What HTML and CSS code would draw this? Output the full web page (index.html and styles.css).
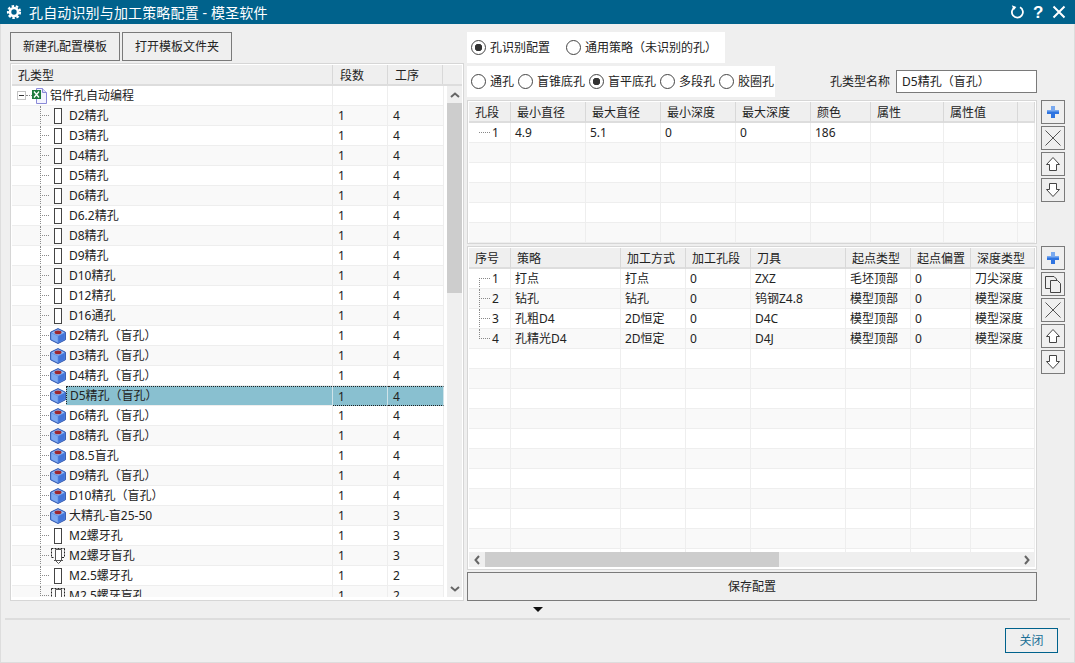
FILE: index.html
```html
<!DOCTYPE html>
<html lang="zh-CN">
<head>
  <meta charset="UTF-8" />
  <title>孔自动识别与加工策略配置 - 模圣软件</title>
  <link rel="stylesheet" href="styles.css">
</head>
<body>
  <svg class="icon-defs" width="0" height="0">
    <symbol id="i-hole" viewBox="0 0 16 16">
      <rect x="4.500" y="0.500" width="7" height="15" fill="#fff" stroke="#444"/>
    </symbol>
    <symbol id="i-cube" viewBox="0 0 16 16">
      <path d="M8 .6 15.400 4.200V11.800L8 15.500.6 11.800V4.200Z" fill="#5b8fe6" stroke="#2f55ad" stroke-linejoin="round"/>
      <path d="M1.400 5.200 7.700 8.300V14.500L1.400 11.300Z" fill="#7fa9f0"/>
      <path d="M8.300 8.300 14.600 5.200V11.300L8.300 14.500Z" fill="#4274d8"/>
      <path d="M8 1.400 14.400 4.400 8 7.600 1.600 4.400Z" fill="#9dbdf3"/>
      <ellipse cx="8" cy="4.400" rx="3.500" ry="1.800" fill="#9c2730"/>
    </symbol>
    <symbol id="i-thread" viewBox="0 0 16 16">
      <path d="M1.500 .5H14.500M1.500 .5V9.500M14.500 .5V9.500M1.500 9.500H4M12 9.500H14.500" fill="none" stroke="#222" stroke-dasharray="2 1"/>
      <path d="M5.500 1.500H11.500V12.500L8.500 15.500 5.500 12.500Z" fill="#fff" stroke="#555"/>
      <path d="M4 12.500H13" stroke="#555"/>
    </symbol>
    <symbol id="i-plus" viewBox="0 0 24 24">
      <path d="M10 6h4v4h4v4h-4v4h-4v-4H6v-4h4Z" fill="#2f74e0"/>
      <path d="M10 6h4v4h-4ZM6 10h12v1.500H6Z" fill="#79a9ef"/>
    </symbol>
    <symbol id="i-cross" viewBox="0 0 24 24">
      <path d="M4.500 4.500 19.500 19.500M19.500 4.500 4.500 19.500" stroke="#555" fill="none"/>
    </symbol>
    <symbol id="i-up" viewBox="0 0 24 24">
      <path d="M12 5.500 18.500 12.500H15.500V18.500H8.500V12.500H5.500Z" fill="#fff" stroke="#444"/>
    </symbol>
    <symbol id="i-down" viewBox="0 0 24 24">
      <path d="M12 18.500 18.500 11.500H15.500V5.500H8.500V11.500H5.500Z" fill="#fff" stroke="#444"/>
    </symbol>
    <symbol id="i-copy" viewBox="0 0 24 24">
      <path d="M4.500 4.500H13L15.500 7V16.500H4.500Z" fill="#efefef" stroke="#444"/>
      <path d="M9.500 8.500H16.500L19.500 11.500V20.500H9.500Z" fill="#efefef" stroke="#444"/>
    </symbol>
  </svg>

  <div class="window">
    <header class="titlebar">
      <svg class="gear" viewBox="0 0 16 16" width="16" height="16">
        <circle cx="8" cy="8" r="4" fill="none" stroke="#fff" stroke-width="2.600"/>
        <circle cx="8" cy="8" r="6" fill="none" stroke="#fff" stroke-width="2.200" stroke-dasharray="2.500 1.690"/>
      </svg>
      <span class="title">孔自动识别与加工策略配置 - 模圣软件</span>
      <svg class="win-btn" viewBox="0 0 16 16" width="16" height="16">
        <path d="M6 3.200A5.500 5.500 0 1 0 11 3.300" fill="none" stroke="#fff" stroke-width="1.800"/>
        <path d="M2.800 1.200 7.300 3 4.800 6.200Z" fill="#fff"/>
      </svg>
      <span class="help">?</span>
      <svg class="win-btn" viewBox="0 0 16 16" width="16" height="16">
        <path d="M2.500 2.500 13.500 13.500M13.500 2.500 2.500 13.500" fill="none" stroke="#fff" stroke-width="2"/>
      </svg>
    </header>

    <main class="content">
      <section class="left">
        <div class="toolbar">
          <button class="btn">新建孔配置模板</button>
          <button class="btn">打开模板文件夹</button>
        </div>
        <div class="panel tree-panel">
          <div class="tree-head">
            <span>孔类型</span><span>段数</span><span>工序</span><span></span>
          </div>
          <div class="tree-body">
            <div class="tree-clip">
              <table class="data tree">
                <colgroup><col><col><col></colgroup>
                <tbody>
                  <tr><td><div class="root"><span class="minus"></span><span class="root-stub"></span>
                    <svg width="15" height="16" viewBox="0 0 15 16"><path d="M4.500 .5H10.500L14.500 4.500V15.500H4.500Z" fill="#f4f4ff" stroke="#8a8ad8"/><path d="M10.500 .5V4.500H14.500" fill="#dcdcfa" stroke="#8a8ad8"/><rect x="0" y="2" width="9" height="9" fill="#1d7a3c"/><path d="M2 3.500 7 9.500M7 3.500 2 9.500" stroke="#fff" stroke-width="1.300"/></svg>
                    <span class="root-label">铝件孔自动编程</span></div></td><td></td><td></td></tr>
                  <tr><td><div class="node"><span class="stub"></span><svg width="16" height="16"><use href="#i-hole"/></svg><span class="label">D2精孔</span></div></td><td>1</td><td>4</td></tr>
                  <tr><td><div class="node"><span class="stub"></span><svg width="16" height="16"><use href="#i-hole"/></svg><span class="label">D3精孔</span></div></td><td>1</td><td>4</td></tr>
                  <tr><td><div class="node"><span class="stub"></span><svg width="16" height="16"><use href="#i-hole"/></svg><span class="label">D4精孔</span></div></td><td>1</td><td>4</td></tr>
                  <tr><td><div class="node"><span class="stub"></span><svg width="16" height="16"><use href="#i-hole"/></svg><span class="label">D5精孔</span></div></td><td>1</td><td>4</td></tr>
                  <tr><td><div class="node"><span class="stub"></span><svg width="16" height="16"><use href="#i-hole"/></svg><span class="label">D6精孔</span></div></td><td>1</td><td>4</td></tr>
                  <tr><td><div class="node"><span class="stub"></span><svg width="16" height="16"><use href="#i-hole"/></svg><span class="label">D6.2精孔</span></div></td><td>1</td><td>4</td></tr>
                  <tr><td><div class="node"><span class="stub"></span><svg width="16" height="16"><use href="#i-hole"/></svg><span class="label">D8精孔</span></div></td><td>1</td><td>4</td></tr>
                  <tr><td><div class="node"><span class="stub"></span><svg width="16" height="16"><use href="#i-hole"/></svg><span class="label">D9精孔</span></div></td><td>1</td><td>4</td></tr>
                  <tr><td><div class="node"><span class="stub"></span><svg width="16" height="16"><use href="#i-hole"/></svg><span class="label">D10精孔</span></div></td><td>1</td><td>4</td></tr>
                  <tr><td><div class="node"><span class="stub"></span><svg width="16" height="16"><use href="#i-hole"/></svg><span class="label">D12精孔</span></div></td><td>1</td><td>4</td></tr>
                  <tr><td><div class="node"><span class="stub"></span><svg width="16" height="16"><use href="#i-hole"/></svg><span class="label">D16通孔</span></div></td><td>1</td><td>4</td></tr>
                  <tr><td><div class="node"><span class="stub"></span><svg width="16" height="16"><use href="#i-cube"/></svg><span class="label">D2精孔（盲孔）</span></div></td><td>1</td><td>4</td></tr>
                  <tr><td><div class="node"><span class="stub"></span><svg width="16" height="16"><use href="#i-cube"/></svg><span class="label">D3精孔（盲孔）</span></div></td><td>1</td><td>4</td></tr>
                  <tr><td><div class="node"><span class="stub"></span><svg width="16" height="16"><use href="#i-cube"/></svg><span class="label">D4精孔（盲孔）</span></div></td><td>1</td><td>4</td></tr>
                  <tr class="selected"><td><div class="node"><span class="stub"></span><svg width="16" height="16"><use href="#i-cube"/></svg><span class="label">D5精孔（盲孔）</span></div></td><td>1</td><td>4</td></tr>
                  <tr><td><div class="node"><span class="stub"></span><svg width="16" height="16"><use href="#i-cube"/></svg><span class="label">D6精孔（盲孔）</span></div></td><td>1</td><td>4</td></tr>
                  <tr><td><div class="node"><span class="stub"></span><svg width="16" height="16"><use href="#i-cube"/></svg><span class="label">D8精孔（盲孔）</span></div></td><td>1</td><td>4</td></tr>
                  <tr><td><div class="node"><span class="stub"></span><svg width="16" height="16"><use href="#i-cube"/></svg><span class="label">D8.5盲孔</span></div></td><td>1</td><td>4</td></tr>
                  <tr><td><div class="node"><span class="stub"></span><svg width="16" height="16"><use href="#i-cube"/></svg><span class="label">D9精孔（盲孔）</span></div></td><td>1</td><td>4</td></tr>
                  <tr><td><div class="node"><span class="stub"></span><svg width="16" height="16"><use href="#i-cube"/></svg><span class="label">D10精孔（盲孔）</span></div></td><td>1</td><td>4</td></tr>
                  <tr><td><div class="node"><span class="stub"></span><svg width="16" height="16"><use href="#i-cube"/></svg><span class="label">大精孔-盲25-50</span></div></td><td>1</td><td>3</td></tr>
                  <tr><td><div class="node"><span class="stub"></span><svg width="16" height="16"><use href="#i-hole"/></svg><span class="label">M2螺牙孔</span></div></td><td>1</td><td>3</td></tr>
                  <tr><td><div class="node"><span class="stub"></span><svg width="16" height="16"><use href="#i-thread"/></svg><span class="label">M2螺牙盲孔</span></div></td><td>1</td><td>3</td></tr>
                  <tr><td><div class="node"><span class="stub"></span><svg width="16" height="16"><use href="#i-hole"/></svg><span class="label">M2.5螺牙孔</span></div></td><td>1</td><td>2</td></tr>
                  <tr><td><div class="node"><span class="stub"></span><svg width="16" height="16"><use href="#i-thread"/></svg><span class="label">M2.5螺牙盲孔</span></div></td><td>1</td><td>2</td></tr>
                </tbody>
              </table>
            </div>
            <div class="vscroll">
              <span class="arrow"><svg width="10" height="6" viewBox="0 0 10 6"><path d="M1 5 5 1.500 9 5" fill="none" stroke="#666" stroke-width="2"/></svg></span>
              <span class="vthumb"></span>
              <span class="track"></span>
              <span class="arrow"><svg width="10" height="6" viewBox="0 0 10 6"><path d="M1 1 5 4.500 9 1" fill="none" stroke="#666" stroke-width="2"/></svg></span>
            </div>
          </div>
        </div>
      </section>

      <section class="right">
        <div class="radio-box mode-box">
          <label class="radio on">孔识别配置</label>
          <label class="radio">通用策略（未识别的孔）</label>
        </div>
        <div class="type-row">
          <div class="radio-box type-box">
            <label class="radio">通孔</label>
            <label class="radio">盲锥底孔</label>
            <label class="radio on">盲平底孔</label>
            <label class="radio">多段孔</label>
            <label class="radio">胶圈孔</label>
          </div>
          <span class="name-label">孔类型名称</span>
          <span class="name-input">D5精孔（盲孔）</span>
        </div>

        <div class="section seg-section">
          <div class="panel">
            <table class="data seg">
              <colgroup><col><col><col><col><col><col><col><col><col></colgroup>
              <thead><tr><th>孔段</th><th>最小直径</th><th>最大直径</th><th>最小深度</th><th>最大深度</th><th>颜色</th><th>属性</th><th>属性值</th><th></th></tr></thead>
              <tbody>
                <tr><td class="seq solo">1</td><td>4.9</td><td>5.1</td><td>0</td><td>0</td><td>186</td><td></td><td></td><td></td></tr>
                <tr><td></td><td></td><td></td><td></td><td></td><td></td><td></td><td></td><td></td></tr>
                <tr><td></td><td></td><td></td><td></td><td></td><td></td><td></td><td></td><td></td></tr>
                <tr><td></td><td></td><td></td><td></td><td></td><td></td><td></td><td></td><td></td></tr>
                <tr><td></td><td></td><td></td><td></td><td></td><td></td><td></td><td></td><td></td></tr>
                <tr><td></td><td></td><td></td><td></td><td></td><td></td><td></td><td></td><td></td></tr>
              </tbody>
            </table>
          </div>
          <div class="side-btns">
            <button class="icon-btn"><svg width="24" height="24"><use href="#i-plus"/></svg></button>
            <button class="icon-btn"><svg width="24" height="24"><use href="#i-cross"/></svg></button>
            <button class="icon-btn"><svg width="24" height="24"><use href="#i-up"/></svg></button>
            <button class="icon-btn"><svg width="24" height="24"><use href="#i-down"/></svg></button>
          </div>
        </div>

        <div class="section ops-section">
          <div class="panel ops-panel">
            <div class="ops-clip">
              <table class="data ops">
                <colgroup><col><col><col><col><col><col><col><col></colgroup>
                <thead><tr><th>序号</th><th>策略</th><th>加工方式</th><th>加工孔段</th><th>刀具</th><th>起点类型</th><th>起点偏置</th><th>深度类型</th></tr></thead>
                <tbody>
                  <tr><td class="seq first">1</td><td>打点</td><td>打点</td><td>0</td><td>ZXZ</td><td>毛坯顶部</td><td>0</td><td>刀尖深度</td></tr>
                  <tr><td class="seq mid">2</td><td>钻孔</td><td>钻孔</td><td>0</td><td>钨钢Z4.8</td><td>模型顶部</td><td>0</td><td>模型深度</td></tr>
                  <tr><td class="seq mid">3</td><td>孔粗D4</td><td>2D恒定</td><td>0</td><td>D4C</td><td>模型顶部</td><td>0</td><td>模型深度</td></tr>
                  <tr><td class="seq last">4</td><td>孔精光D4</td><td>2D恒定</td><td>0</td><td>D4J</td><td>模型顶部</td><td>0</td><td>模型深度</td></tr>
                  <tr><td></td><td></td><td></td><td></td><td></td><td></td><td></td><td></td></tr>
                  <tr><td></td><td></td><td></td><td></td><td></td><td></td><td></td><td></td></tr>
                  <tr><td></td><td></td><td></td><td></td><td></td><td></td><td></td><td></td></tr>
                  <tr><td></td><td></td><td></td><td></td><td></td><td></td><td></td><td></td></tr>
                  <tr><td></td><td></td><td></td><td></td><td></td><td></td><td></td><td></td></tr>
                  <tr><td></td><td></td><td></td><td></td><td></td><td></td><td></td><td></td></tr>
                  <tr><td></td><td></td><td></td><td></td><td></td><td></td><td></td><td></td></tr>
                  <tr><td></td><td></td><td></td><td></td><td></td><td></td><td></td><td></td></tr>
                  <tr><td></td><td></td><td></td><td></td><td></td><td></td><td></td><td></td></tr>
                  <tr><td></td><td></td><td></td><td></td><td></td><td></td><td></td><td></td></tr>
                  <tr><td></td><td></td><td></td><td></td><td></td><td></td><td></td><td></td></tr>
                </tbody>
              </table>
            </div>
            <div class="hscroll">
              <span class="harrow"><svg width="6" height="10" viewBox="0 0 6 10"><path d="M5 1 1.500 5 5 9" fill="none" stroke="#666" stroke-width="2"/></svg></span>
              <span class="hthumb"></span>
              <span class="track"></span>
              <span class="harrow"><svg width="6" height="10" viewBox="0 0 6 10"><path d="M1 1 4.500 5 1 9" fill="none" stroke="#666" stroke-width="2"/></svg></span>
            </div>
          </div>
          <div class="side-btns">
            <button class="icon-btn"><svg width="24" height="24"><use href="#i-plus"/></svg></button>
            <button class="icon-btn"><svg width="24" height="24"><use href="#i-copy"/></svg></button>
            <button class="icon-btn"><svg width="24" height="24"><use href="#i-cross"/></svg></button>
            <button class="icon-btn"><svg width="24" height="24"><use href="#i-up"/></svg></button>
            <button class="icon-btn"><svg width="24" height="24"><use href="#i-down"/></svg></button>
          </div>
        </div>

        <button class="btn save-btn">保存配置</button>
      </section>
    </main>

    <div class="expander"><span class="caret"></span></div>

    <footer class="footer">
      <button class="btn close-btn">关闭</button>
    </footer>
  </div>
</body>
</html>
```

FILE: styles.css
```css
* {
  box-sizing: border-box;
}

body {
  margin: 0;
  background: #efefef;
  color: #222;
  font-family: "Noto Sans", "Noto Sans CJK SC", sans-serif;
  font-size: 12px;
  line-height: 19px;
  overflow: hidden;
}

.icon-defs {
  position: absolute;
}

.window {
  width: 1075px;
  height: 663px;
  display: flex;
  flex-direction: column;
  background: #efefef;
  border: 1px solid #ddd;
  border-top: none;
}

/* title bar */
.titlebar {
  height: 24px;
  margin: 0 -1px;
  flex: none;
  display: flex;
  align-items: center;
  padding: 0 8px 0 6px;
  background: #00628c;
  color: #fff;
}

.title {
  flex: 1;
  margin-left: 7px;
  font-size: 14px;
  letter-spacing: 0.15px;
}

.win-btn {
  display: block;
}

.help {
  width: 10px;
  margin: 0 8px;
  text-align: center;
  font-family: "Liberation Sans", sans-serif;
  font-size: 17px;
  font-weight: bold;
}

/* main layout */
.content {
  flex: none;
  height: 577px;
  display: flex;
  gap: 3px;
  padding: 8px 0 0 9px;
}

.left {
  width: 454px;
  display: flex;
  flex-direction: column;
}

.right {
  width: 598px;
  display: flex;
  flex-direction: column;
}

.toolbar {
  display: flex;
  gap: 2px;
  height: 29px;
  margin-bottom: 2px;
}

.btn {
  padding: 0;
  border: 1px solid #7a7a7a;
  background: #efefef;
  color: #222;
  font: inherit;
}

.toolbar .btn {
  width: 110px;
}

.panel {
  background: #fff;
  border: 1px solid #d6d6d6;
  padding: 1px;
}

/* tree */
.tree-panel {
  height: 538px;
  display: flex;
  flex-direction: column;
  overflow: hidden;
}

.tree-head {
  height: 21px;
  flex: none;
  display: grid;
  grid-template-columns: 321px 55px 55px 1fr;
  background: #efefef;
  border-bottom: 2px solid #ddd;
}

.tree-head span {
  padding: 2px 0 0 6px;
  line-height: 17px;
  border-right: 1px solid #d8d8d8;
}

.tree-head span + span {
  padding-left: 7px;
}

.tree-head span:last-child {
  border-right: none;
}

.tree-body {
  flex: 1;
  min-height: 0;
  display: flex;
  gap: 3px;
  padding-bottom: 2px;
}

.tree-clip {
  width: 432px;
  overflow: hidden;
}

.data {
  width: 100%;
  table-layout: fixed;
  border-collapse: separate;
  border-spacing: 0;
}

.data th {
  height: 21px;
  padding: 2px 0 0 6px;
  line-height: 17px;
  background: #efefef;
  border-right: 1px solid #d8d8d8;
  border-bottom: 2px solid #ddd;
  font-weight: normal;
  text-align: left;
}

.data td {
  height: 20px;
  padding: 0 0 0 5px;
  border-right: 1px solid #eee;
  border-bottom: 1px solid #eee;
  white-space: nowrap;
  overflow: hidden;
}

.data tbody tr:nth-child(even) td {
  background: #f9f9f9;
}

.seg td,
.ops td {
  padding-left: 4px;
}

.tree col:nth-child(1) { width: 321px; }
.tree col:nth-child(2) { width: 55px; }
.tree col:nth-child(3) { width: 56px; }

.tree td:first-child {
  padding: 0;
}

.root {
  display: flex;
  align-items: center;
  height: 19px;
  padding-left: 5px;
}

.root svg,
.node svg {
  flex: none;
}

.minus {
  width: 9px;
  height: 9px;
  border: 1px solid #c4c4c4;
  background: linear-gradient(#333, #333) center / 5px 1px no-repeat #fff;
}

.root-stub {
  width: 6px;
  border-top: 1px dotted #888;
}

.root-label {
  margin-left: 3px;
}

.node {
  display: flex;
  align-items: center;
  height: 19px;
  padding-left: 28px;
}

.stub {
  align-self: stretch;
  width: 10px;
  margin-bottom: -1px;
  position: relative;
  border-left: 1px dotted #888;
}

.stub::after {
  content: "";
  position: absolute;
  left: 1px;
  top: 9px;
  width: 7px;
  border-top: 1px dotted #888;
}

.label {
  flex: 1;
  align-self: stretch;
  padding-left: 3px;
  line-height: 19px;
}

.selected td {
  background: #89c0d0 !important;
  border-top: 1px dotted #222;
  border-bottom: 1px dotted #222;
  border-right-color: #cfe3e9;
  line-height: 17px;
}

.selected td:first-child {
  background: #fff !important;
  border-top: none;
  border-bottom-color: #eee;
  border-bottom-style: solid;
  border-right-color: #cfe3e9;
}

.selected .label {
  background: #89c0d0;
  border: 1px dotted #222;
  border-right: none;
  height: 20px;
  padding-left: 3px;
  line-height: 18px;
}

/* scrollbars */
.vscroll {
  width: 15px;
  flex: none;
  display: flex;
  flex-direction: column;
  background: #efefef;
}

.arrow {
  height: 17px;
  flex: none;
  display: flex;
  align-items: center;
  justify-content: center;
}

.vthumb {
  height: 190px;
  flex: none;
  background: #cdcdcd;
}

.track {
  flex: 1;
}

.hscroll {
  height: 15px;
  display: flex;
  background: #efefef;
}

.harrow {
  width: 16px;
  flex: none;
  display: flex;
  align-items: center;
  justify-content: center;
}

.hthumb {
  width: 294px;
  flex: none;
  background: #cdcdcd;
}

/* radios */
.radio-box {
  display: flex;
  align-items: center;
  padding-left: 4px;
  background: #fff;
}

.mode-box {
  width: 258px;
  height: 31px;
  gap: 16px;
  margin-bottom: 3px;
}

.type-row {
  display: flex;
  align-items: center;
  height: 31px;
  width: 570px;
  margin-bottom: 3px;
}

.type-box {
  width: 308px;
  height: 31px;
  flex: none;
  gap: 4px;
}

.radio {
  display: flex;
  flex: none;
  align-items: center;
  gap: 4px;
  white-space: nowrap;
}

.radio::before {
  content: "";
  flex: none;
  width: 13px;
  height: 13px;
  border: 1px solid #444;
  border-radius: 50%;
  background: #fff;
}

.radio.on::before {
  background: radial-gradient(circle, #333 0 3.500px, #fff 4px);
}

.name-label {
  margin-left: 55px;
}

.name-input {
  width: 141px;
  height: 23px;
  margin-left: 6px;
  padding-left: 5px;
  border: 1px solid #7a7a7a;
  background: #fff;
  line-height: 21px;
}

/* tables on the right */
.section {
  display: flex;
  gap: 4px;
}

.section .panel {
  width: 570px;
  overflow: hidden;
}

.seg-section {
  height: 144px;
  margin-bottom: 2px;
}

.ops-section {
  height: 324px;
  margin-bottom: 2px;
}

.side-btns {
  display: flex;
  flex-direction: column;
  gap: 2px;
}

.icon-btn {
  width: 24px;
  height: 24px;
  padding: 0;
  border: 1px solid #7a7a7a;
  background: #efefef;
  display: block;
}

.icon-btn svg {
  display: block;
  margin: -1px;
}

.seg col:nth-child(1) { width: 42px; }
.seg col:nth-child(2) { width: 75px; }
.seg col:nth-child(3) { width: 75px; }
.seg col:nth-child(4) { width: 75px; }
.seg col:nth-child(5) { width: 75px; }
.seg col:nth-child(6) { width: 60px; }
.seg col:nth-child(7) { width: 73px; }
.seg col:nth-child(8) { width: 74px; }

.ops-panel {
  display: flex;
  flex-direction: column;
}

.ops-clip {
  height: 304px;
  flex: none;
  overflow: hidden;
}

.ops col:nth-child(1) { width: 42px; }
.ops col:nth-child(2) { width: 110px; }
.ops col:nth-child(3) { width: 65px; }
.ops col:nth-child(4) { width: 65px; }
.ops col:nth-child(5) { width: 95px; }
.ops col:nth-child(6) { width: 65px; }
.ops col:nth-child(7) { width: 60px; }

.data td.seq {
  position: relative;
  padding-left: 23px;
}

.seq::before {
  content: "";
  position: absolute;
  left: 10px;
  top: 9px;
  width: 11px;
  border-top: 1px dotted #888;
}

.seq.first::after,
.seq.mid::after,
.seq.last::after {
  content: "";
  position: absolute;
  left: 10px;
  border-left: 1px dotted #888;
}

.seq.first::after { top: 9px; bottom: -1px; }
.seq.mid::after { top: 0; bottom: -1px; }
.seq.last::after { top: 0; height: 10px; }

.save-btn {
  width: 570px;
  height: 29px;
}

/* bottom */
.expander {
  height: 17px;
  flex: none;
  display: flex;
  justify-content: center;
  align-items: center;
}

.caret {
  width: 0;
  height: 0;
  border-left: 5px solid transparent;
  border-right: 5px solid transparent;
  border-top: 5px solid #111;
}

.footer {
  flex: 1;
  margin: 0 4px;
  padding: 8px 12px 0 0;
  border-top: 2px solid #ddd;
  display: flex;
  justify-content: flex-end;
  align-items: flex-start;
}

.close-btn {
  width: 53px;
  height: 25px;
  border-color: #00628c;
  color: #1b6f96;
}
```
